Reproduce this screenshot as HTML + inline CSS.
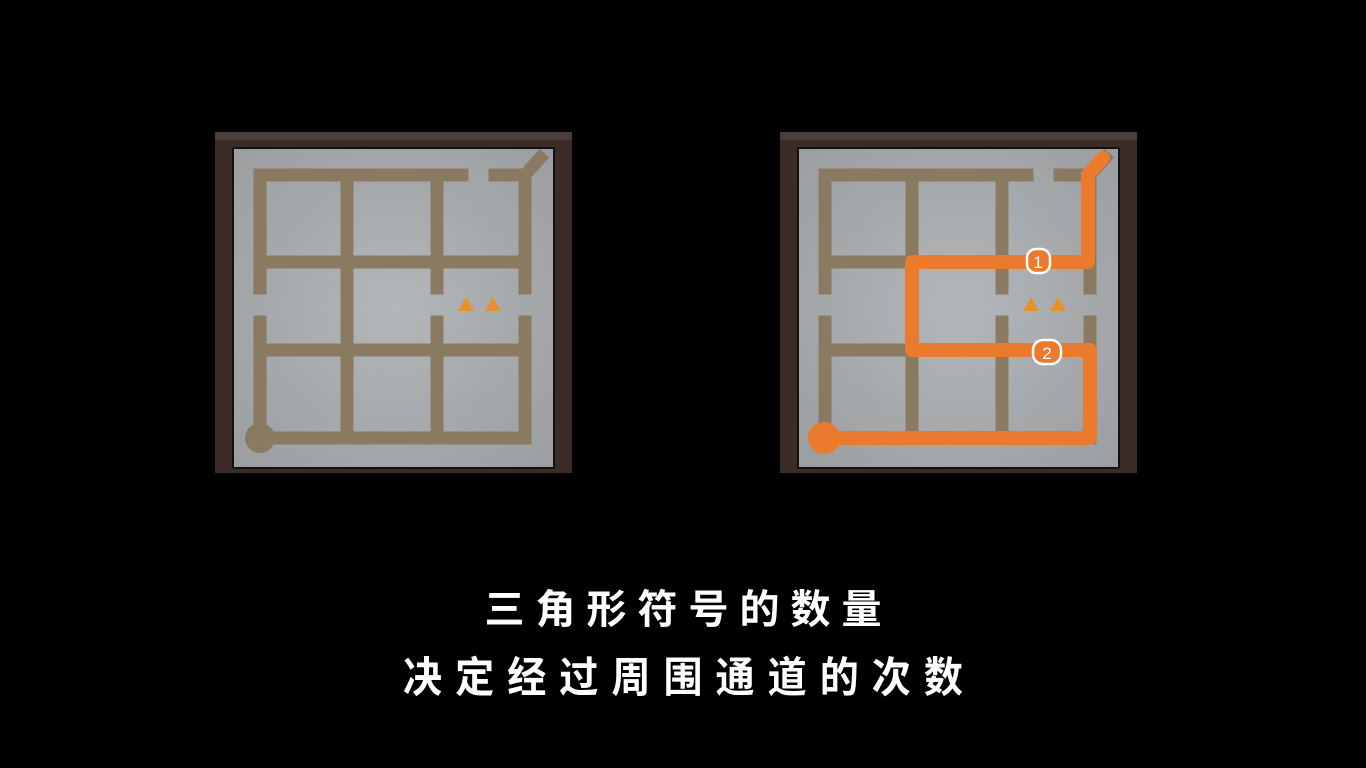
<!DOCTYPE html>
<html><head><meta charset="utf-8"><style>
html,body{margin:0;padding:0;background:#000;width:1366px;height:768px;overflow:hidden}
svg{position:absolute;left:0;top:0}
.t{position:absolute;left:0;width:1366px;text-align:center;color:#fff;font-family:"Liberation Sans","Noto Sans CJK SC",sans-serif;font-weight:bold;white-space:nowrap}
</style></head><body>
<svg width="1366" height="768" viewBox="0 0 1366 768">
<defs>
<radialGradient id="g" cx="50%" cy="50%" r="70%"><stop offset="0" stop-color="#b3b7b9"/><stop offset="1" stop-color="#9a9ea1"/></radialGradient>
<g id="board">
<rect x="215" y="132" width="357" height="341" fill="#3a2b27"/>
<rect x="215" y="132" width="357" height="8" fill="#4a3d3a"/>
<rect x="232" y="147" width="323" height="322" fill="#111"/>
<rect x="234" y="149" width="319" height="318" fill="url(#g)"/>
<g stroke="#8a7a62" stroke-width="13" stroke-linecap="square" fill="none">
<path d="M260 175H462M495 175H525L540 158M260 175V288M260 322V438M347 175V438M437 175V288M437 322V438M525 175V288M525 322V438M260 262H525M260 350H525M260 438H525"/>
</g>
<circle cx="260" cy="438" r="15" fill="#8a7a62"/>
<path d="M458 311L466 297L474 311ZM485 311L493 297L501 311Z" fill="#e8902a"/>
</g>
</defs>
<use href="#board"/>
<use href="#board" x="565"/>
<path d="M1103 158L1088 175V262H912V350H1090V438H824" stroke="#e97a2e" stroke-width="14" fill="none" stroke-linejoin="round" stroke-linecap="round"/>
<circle cx="824" cy="438" r="16" fill="#e97a2e"/>
<rect x="1027" y="249" width="23" height="24" rx="9" fill="#e97a2e" stroke="#fff" stroke-width="2.5"/>
<text x="1038" y="268" fill="#fff" font-size="17" text-anchor="middle" font-family="Liberation Sans">1</text>
<rect x="1033" y="340" width="28" height="24" rx="10" fill="#e97a2e" stroke="#fff" stroke-width="2.5"/>
<text x="1047" y="359" fill="#fff" font-size="17" text-anchor="middle" font-family="Liberation Sans">2</text>
</svg>
<div class="t" style="top:577px;font-size:40px;letter-spacing:11px;text-indent:11px">三角形符号的数量</div>
<div class="t" style="top:644px;font-size:42px;letter-spacing:14px;text-indent:14px;transform:scaleX(0.93)">决定经过周围通道的次数</div>
</body></html>
